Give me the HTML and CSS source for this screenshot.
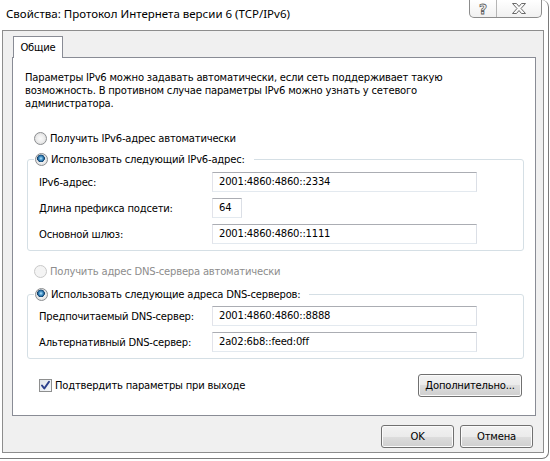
FILE: index.html
```html
<!DOCTYPE html>
<html lang="ru">
<head>
<meta charset="utf-8">
<title>Свойства: Протокол Интернета версии 6 (TCP/IPv6)</title>
<link rel="stylesheet" href="styles.css">
</head>
<body>
<div class="window">
  <div class="titlebar">
    <span class="title">Свойства: Протокол Интернета версии 6 (TCP/IPv6)</span>
    <div class="caption-buttons">
      <span class="cap-btn help"><span class="help-glyph">?</span></span>
      <span class="cap-btn close">
        <svg width="14" height="11" viewBox="0 0 14 11"><polygon points="0.5,0.5 4.5,0.5 7,3.5 9.5,0.5 13.5,0.5 9,5.5 13.5,10.5 9.5,10.5 7,7.5 4.5,10.5 0.5,10.5 5,5.5" fill="#fafafa" stroke="#6a6a6a" stroke-width="1" stroke-linejoin="round"/></svg>
      </span>
    </div>
  </div>
  <div class="client">
    <div class="tabs">
      <div class="tab active">Общие</div>
    </div>
    <div class="page">
      <p class="intro">Параметры IPv6 можно задавать автоматически, если сеть поддерживает такую<br>возможность. В противном случае параметры IPv6 можно узнать у сетевого<br>администратора.</p>

      <div class="radio-row first"><span class="radio"></span><span>Получить IPv6-адрес автоматически</span></div>

      <fieldset class="group g1">
        <legend><span class="radio-row"><span class="radio checked"></span><span>Использовать следующий IPv6-адрес:</span></span></legend>
        <div class="field-row"><span class="lbl">IPv6-адрес:</span><span class="input wide">2001:4860:4860::2334</span></div>
        <div class="field-row"><span class="lbl">Длина префикса подсети:</span><span class="input short">64</span></div>
        <div class="field-row"><span class="lbl">Основной шлюз:</span><span class="input wide">2001:4860:4860::1111</span></div>
      </fieldset>

      <div class="radio-row disabled dns-auto"><span class="radio"></span><span>Получить адрес DNS-сервера автоматически</span></div>

      <fieldset class="group g2">
        <legend><span class="radio-row"><span class="radio checked"></span><span>Использовать следующие адреса DNS-серверов:</span></span></legend>
        <div class="field-row"><span class="lbl">Предпочитаемый DNS-сервер:</span><span class="input wide">2001:4860:4860::8888</span></div>
        <div class="field-row"><span class="lbl">Альтернативный DNS-сервер:</span><span class="input wide">2a02:6b8::feed:0ff</span></div>
      </fieldset>

      <div class="bottom-row">
        <div class="check-row">
          <span class="checkbox"><svg width="11" height="11" viewBox="0 0 11 11"><path d="M2 5.5 L4.3 8.5 L9 1.8" fill="none" stroke="#2b3f8c" stroke-width="2" stroke-linecap="round" stroke-linejoin="round"/></svg></span>
          <span>Подтвердить параметры при выходе</span>
        </div>
        <button class="btn advanced">Дополнительно...</button>
      </div>
    </div>
    <div class="dialog-buttons">
      <button class="btn ok">OK</button>
      <button class="btn cancel">Отмена</button>
    </div>
  </div>
</div>
</body>
</html>
```

FILE: styles.css
```css
* { box-sizing: border-box; }

body {
  margin: 0;
  background: #ffffff;
  font-family: "DejaVu Sans", Tahoma, sans-serif;
  font-size: 10px;
  letter-spacing: -0.2px;
  color: #000;
}

.window {
  width: 549px;
  height: 459px;
  display: flex;
  flex-direction: column;
  background: #ffffff;
  border-right: 1px solid #7a7a7a;
  border-bottom: 1px solid #7a7a7a;
  border-radius: 0 7px 7px 0;
}

.titlebar {
  height: 30px;
  display: flex;
  align-items: flex-start;
}

.title {
  padding-left: 6px;
  line-height: 28px;
  font-family: "Noto Sans", "Open Sans", sans-serif;
  font-size: 11.5px;
  letter-spacing: 0;
  color: #000;
}

.caption-buttons {
  margin-left: auto;
  margin-right: 6px;
  height: 18px;
  display: flex;
  border: 1px solid #8c8c8c;
  border-top: 0;
  border-radius: 0 0 5px 5px;
  background: linear-gradient(#ffffff, #f1f1f1);
  overflow: hidden;
}

.cap-btn {
  display: flex;
  align-items: center;
  justify-content: center;
}

.help {
  width: 27px;
  border-right: 1px solid #b5b5b5;
}

.help-glyph {
  font-family: "DejaVu Sans", sans-serif;
  font-weight: bold;
  font-size: 14px;
  line-height: 14px;
  letter-spacing: 0;
  color: #fafafa;
  -webkit-text-stroke: 0.8px #5f5f5f;
}

.close {
  width: 44px;
}

.client {
  flex: 1;
  margin: 0 4px 5px 2px;
  display: flex;
  flex-direction: column;
  background: #f0f0f0;
  border: 1px solid #8d8d8d;
  padding: 5px 7px 0 9px;
}

.tabs {
  display: flex;
  height: 21px;
}

.tab {
  position: relative;
  z-index: 1;
  margin-left: 1px;
  width: 50px;
  height: 22px;
  border: 1px solid #898c95;
  border-bottom: 0;
  background: #ffffff;
  text-align: center;
  line-height: 21px;
}

.page {
  flex: 1;
  display: flex;
  flex-direction: column;
  border: 1px solid #898c95;
  background: #ffffff;
  padding: 0 12px;
}

.intro {
  margin: 13px 0 0;
  line-height: 13px;
}

.radio-row {
  display: flex;
  align-items: center;
  height: 16px;
  gap: 3px;
  white-space: nowrap;
}

.radio-row.first {
  margin: 20px 0 0 9px;
}

.radio {
  flex: none;
  width: 13px;
  height: 13px;
  border-radius: 50%;
  border: 1px solid #8b8d90;
  background: radial-gradient(circle at 50% 50%, #fafafa 0, #efefef 40%, #d6d6d6 100%);
}

.radio.checked {
  background:
    radial-gradient(circle at 45% 40%, #c4e8fb 0, #5aa7d8 1.4px, #1d5e93 3px, #0f3d66 3.6px, rgba(15,61,102,0) 4.1px),
    radial-gradient(circle at 50% 50%, #fafafa 0, #efefef 40%, #d6d6d6 100%);
}

.disabled {
  color: #8d8d8d;
}

.disabled .radio {
  border-color: #c9c9c9;
  background: #f4f4f4;
}

.group {
  margin: 5px -1px 0 2px;
  padding: 0 0 6px 11px;
  border: 1px solid #d5dfe5;
  border-radius: 3px;
  min-width: 0;
}

.group legend {
  margin-left: -5px;
  padding: 0 9px 0 1px;
}

.field-row {
  display: flex;
  align-items: center;
  height: 20px;
  margin-top: 6px;
}

.field-row:first-of-type {
  margin-top: 5px;
}

.lbl {
  width: 173px;
  flex: none;
}

.input {
  height: 20px;
  line-height: 18px;
  padding-left: 6px;
  border: 1px solid;
  border-color: #abadb3 #dbdfe6 #e3e9ef #e2e3ea;
  background: #ffffff;
}

.input.wide { width: 265px; }
.input.short { width: 30px; }

.dns-auto {
  margin: 12px 0 0 9px;
}

.g2 {
  margin-top: 7px;
}

.g2 .field-row:first-of-type {
  margin-top: 4px;
}

.bottom-row {
  display: flex;
  align-items: center;
  justify-content: space-between;
  margin: 15px 1px 0 14px;
}

.check-row {
  display: flex;
  align-items: center;
  gap: 3px;
}

.checkbox {
  width: 13px;
  height: 13px;
  border: 1px solid #8e8f8f;
  background: linear-gradient(135deg, #dfe3ea, #f7f8fa);
  display: flex;
  align-items: center;
  justify-content: center;
}

.btn {
  height: 23px;
  padding: 0;
  border: 1px solid #707070;
  border-radius: 3px;
  background: linear-gradient(#f2f2f2 0%, #ebebeb 50%, #dddddd 50%, #cfcfcf 100%);
  box-shadow: inset 0 0 0 1px #fbfbfb;
  font-family: "DejaVu Sans", Tahoma, sans-serif;
  font-size: 10px;
  letter-spacing: -0.2px;
  color: #000;
}

.advanced {
  width: 104px;
}

.dialog-buttons {
  display: flex;
  justify-content: flex-end;
  gap: 6px;
  padding: 9px 3px 4px 0;
}

.ok, .cancel {
  width: 73px;
}
```
